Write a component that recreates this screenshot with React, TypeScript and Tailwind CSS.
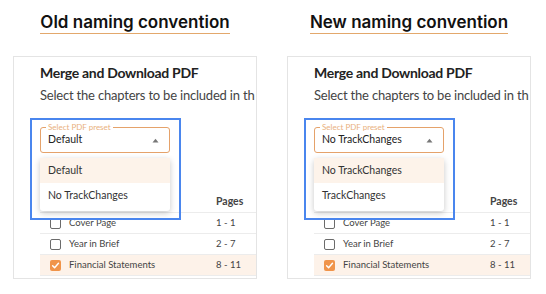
import React from "react";

const rows = [
  { name: "Cover Page", pages: "1 - 1", checked: false },
  { name: "Year in Brief", pages: "2 - 7", checked: false },
  { name: "Financial Statements", pages: "8 - 11", checked: true },
];

function Checkbox({ checked }: { checked: boolean }) {
  if (checked) {
    return (
      <span className="w-[11px] h-[11px] rounded-[2px] bg-[#f0944a] flex items-center justify-center">
        <svg width="9" height="9" viewBox="0 0 10 10" fill="none">
          <path d="M1.8 5.2 L4 7.4 L8.3 2.6" stroke="white" strokeWidth="1.6" strokeLinecap="round" strokeLinejoin="round" />
        </svg>
      </span>
    );
  }
  return <span className="w-[11px] h-[11px] rounded-[2px] border-[1.5px] border-[#6b6b6b] bg-white" />;
}

function Column({ heading, value, options }: { heading: string; value: string; options: string[] }) {
  return (
    <div className="w-[244px] flex flex-col items-center">
      <div className="mt-[13px] h-[21px] flex flex-col items-center">
        <div className="text-[17px] leading-[19px] font-semibold text-[#111]" style={{ fontFamily: "Inter, sans-serif" }}>
          {heading}
        </div>
        <div className="mt-[1px] w-full h-[1.5px] bg-[#e3a86c]" />
      </div>
      <div
        className="relative mt-[22px] w-[244px] h-[223px] border border-[#e4e4e4] overflow-hidden pl-[26px] pt-[6px]"
        style={{ fontFamily: "Lato, 'Open Sans', sans-serif" }}
      >
        <div className="text-[14px] leading-[20px] font-bold tracking-[-0.3px] text-[#222] whitespace-nowrap">
          Merge and Download PDF
        </div>
        <div className="mt-[3px] text-[13px] leading-[18px] tracking-[-0.2px] text-[#444] whitespace-nowrap">
          Select the chapters to be included in th
        </div>
        <div className="relative mt-[23px] w-[130px] h-[26px] border-[1.5px] border-[#e5a26a] rounded-[3px] flex items-center pl-[7px] pr-[10px]">
          <span className="absolute -top-[6px] left-[5px] bg-white px-[2px] text-[8px] leading-[10px] text-[#e9b07e]">
            Select PDF preset
          </span>
          <span className="flex-1 text-[10.5px] text-[#222] whitespace-nowrap">{value}</span>
          <svg width="7" height="5" viewBox="0 0 7 5">
            <path d="M0.5 4.5 L3.5 0.8 L6.5 4.5 Z" fill="#777" />
          </svg>
        </div>
        <div className="mt-[39px] w-[217px]">
          <div className="h-[21px] flex items-center border-b border-[#ececec]">
            <div className="w-[176px]" />
            <div className="text-[10.5px] font-bold text-[#444]">Pages</div>
          </div>
          {rows.map((r) => (
            <div
              key={r.name}
              className={`h-[21px] flex items-center border-b border-[#ececec] ${r.checked ? "bg-[#fdf2e9]" : ""}`}
            >
              <div className="w-[176px] flex items-center pl-[10px] gap-[8px]">
                <Checkbox checked={r.checked} />
                <span className="text-[9.5px] text-[#444]">{r.name}</span>
              </div>
              <div className="text-[9.5px] text-[#444]">{r.pages}</div>
            </div>
          ))}
        </div>
        <div className="absolute left-[26px] top-[101px] w-[130px] h-[53px] bg-white rounded-[3px] shadow-[0_2px_6px_rgba(0,0,0,0.22)] flex flex-col">
          {options.map((o, i) => (
            <div
              key={o}
              className={`h-[25px] flex items-center pl-[8px] text-[10.5px] text-[#333] ${i === 0 ? "bg-[#fdf3ea]" : ""}`}
            >
              {o}
            </div>
          ))}
        </div>
        <div className="absolute left-[16px] top-[61px] w-[151px] h-[102px] border-2 border-[#4a86ee]" />
      </div>
    </div>
  );
}

export default function App() {
  return (
    <div className="w-[546px] h-[294px] bg-white flex pl-[13px] gap-[30px] overflow-hidden">
      <Column heading="Old naming convention" value="Default" options={["Default", "No TrackChanges"]} />
      <Column heading="New naming convention" value="No TrackChanges" options={["No TrackChanges", "TrackChanges"]} />
    </div>
  );
}
